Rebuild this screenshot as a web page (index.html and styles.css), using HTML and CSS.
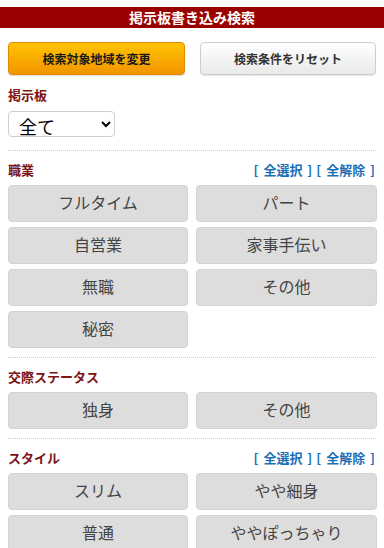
FILE: index.html
```html
<!DOCTYPE html>
<html lang="ja">
<head>
<meta charset="utf-8">
<link rel="stylesheet" href="styles.css">
</head>
<body>
<header class="title">掲示板書き込み検索</header>
<main class="page">
  <div class="actions">
    <button class="btn-area">検索対象地域を変更</button>
    <button class="btn-reset">検索条件をリセット</button>
  </div>
  <div class="board">
    <div class="label">掲示板</div>
    <select class="board-select"><option>全て</option></select>
  </div>
  <section class="group">
    <div class="group-head">
      <span class="label">職業</span>
      <span class="links"><a class="link">[ 全選択 ]</a><a class="link">[ 全解除 ]</a></span>
    </div>
    <div class="choices">
      <button class="choice">フルタイム</button>
      <button class="choice">パート</button>
      <button class="choice">自営業</button>
      <button class="choice">家事手伝い</button>
      <button class="choice">無職</button>
      <button class="choice">その他</button>
      <button class="choice">秘密</button>
    </div>
  </section>
  <section class="group">
    <div class="group-head">
      <span class="label">交際ステータス</span>
    </div>
    <div class="choices">
      <button class="choice">独身</button>
      <button class="choice">その他</button>
    </div>
  </section>
  <section class="group">
    <div class="group-head">
      <span class="label">スタイル</span>
      <span class="links"><a class="link">[ 全選択 ]</a><a class="link">[ 全解除 ]</a></span>
    </div>
    <div class="choices">
      <button class="choice">スリム</button>
      <button class="choice">やや細身</button>
      <button class="choice">普通</button>
      <button class="choice">ややぽっちゃり</button>
    </div>
  </section>
</main>
</body>
</html>
```
FILE: styles.css
```css
* { box-sizing: border-box; }
html, body { margin: 0; padding: 0; background: #fff; }
body {
  font-family: "Noto Sans CJK JP", "Noto Sans", sans-serif;
  color: #333;
  overflow: hidden;
}
.title {
  margin-top: 7px;
  height: 21px;
  line-height: 21px;
  background: #990000;
  color: #fff;
  font-size: 14px;
  font-weight: bold;
  text-align: center;
}
.page { padding: 0 8px; }
.actions {
  display: grid;
  grid-template-columns: 177px 176px;
  column-gap: 15px;
  margin-top: 14px;
}
.actions button {
  height: 33px;
  border-radius: 4px;
  font-family: inherit;
  font-size: 12px;
  font-weight: bold;
  padding: 0 0 1px;
}
.btn-area {
  background: linear-gradient(#ffc400, #f29400);
  border: 1px solid #e08800;
  color: #1a1a1a;
  box-shadow: 0 1px 1px rgba(0,0,0,0.15);
}
.btn-reset {
  background: linear-gradient(#ffffff, #e9e9e9);
  border: 1px solid #cccccc;
  color: #333;
  box-shadow: 0 1px 1px rgba(0,0,0,0.1);
}
.label {
  color: #7d1414;
  font-size: 13px;
  font-weight: bold;
  line-height: 16px;
}
.board { padding-top: 12px; padding-bottom: 13px; }
.board .label { display: block; margin-bottom: 8px; }
.board-select {
  width: 107px;
  height: 26px;
  font-family: inherit;
  font-size: 18px;
  color: #000;
  border: 1px solid #cfcfcf;
  border-radius: 4px;
  background: #fff;
  padding: 0 0 0 6px;
  display: block;
}
.group {
  border-top: 1px dotted #cccccc;
  padding-top: 11px;
  padding-bottom: 9px;
}
.group-head {
  display: flex;
  justify-content: space-between;
  align-items: center;
  height: 16px;
  margin-bottom: 7px;
}
.links {
  display: flex;
  gap: 4px;
  color: #1a70b8;
  font-size: 13px;
  font-weight: bold;
  line-height: 16px;
  white-space: pre;
  word-spacing: 2px;
  padding-right: 1px;
}
.choices {
  display: grid;
  grid-template-columns: 180px 181px;
  column-gap: 8px;
  row-gap: 5px;
}
.choice {
  height: 37px;
  background: #dddddd;
  border: 1px solid #d3d3d3;
  border-radius: 4px;
  font-family: inherit;
  font-size: 16px;
  color: #444;
  padding: 0 0 4px;
}
```
